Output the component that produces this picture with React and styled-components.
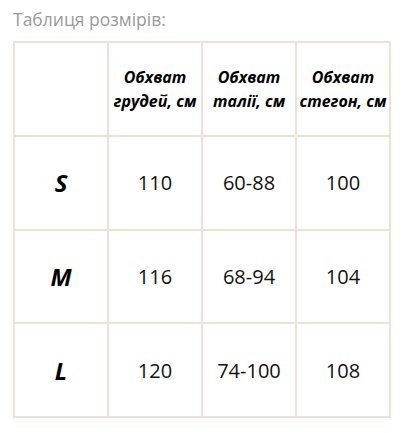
import React from "react";
import styled, { createGlobalStyle } from "styled-components";

const GlobalStyle = createGlobalStyle`
  body {
    margin: 0;
    background: #fff;
    font-family: "Open Sans", "Noto Sans", sans-serif;
  }
`;

const Wrapper = styled.div`
  padding: 7px 13px;
`;

const Title = styled.p`
  margin: 0 0 10px;
  font-size: 17.5px;
  line-height: 24px;
  color: #9a9a9a;
`;

const Table = styled.table`
  border-collapse: collapse;
  table-layout: fixed;
  width: 378px;
`;

const Cell = styled.td`
  width: 92px;
  height: 91.75px;
  padding: 0;
  border: 2px solid #efe1d6;
  text-align: center;
  vertical-align: middle;
  color: #111;
  font-size: 20px;
`;

const HeadCell = styled(Cell).attrs({ as: "th" })`
  font-size: 16px;
  line-height: 24px;
  font-weight: 700;
  font-style: italic;
  color: #000;
`;

const SizeCell = styled(Cell)`
  font-size: 24px;
  font-weight: 700;
  font-style: italic;
  color: #000;
`;

const headers = [
  ["Обхват", "грудей, см"],
  ["Обхват", "талії, см"],
  ["Обхват", "стегон, см"],
];

const rows = [
  ["S", "110", "60-88", "100"],
  ["M", "116", "68-94", "104"],
  ["L", "120", "74-100", "108"],
];

export default function App() {
  return (
    <>
      <GlobalStyle />
      <Wrapper>
        <Title>Таблиця розмірів:</Title>
        <Table>
          <thead>
            <tr>
              <HeadCell />
              {headers.map(([a, b], i) => (
                <HeadCell key={i}>
                  {a}
                  <br />
                  {b}
                </HeadCell>
              ))}
            </tr>
          </thead>
          <tbody>
            {rows.map(([size, ...vals]) => (
              <tr key={size}>
                <SizeCell>{size}</SizeCell>
                {vals.map((v, i) => (
                  <Cell key={i}>{v}</Cell>
                ))}
              </tr>
            ))}
          </tbody>
        </Table>
      </Wrapper>
    </>
  );
}
